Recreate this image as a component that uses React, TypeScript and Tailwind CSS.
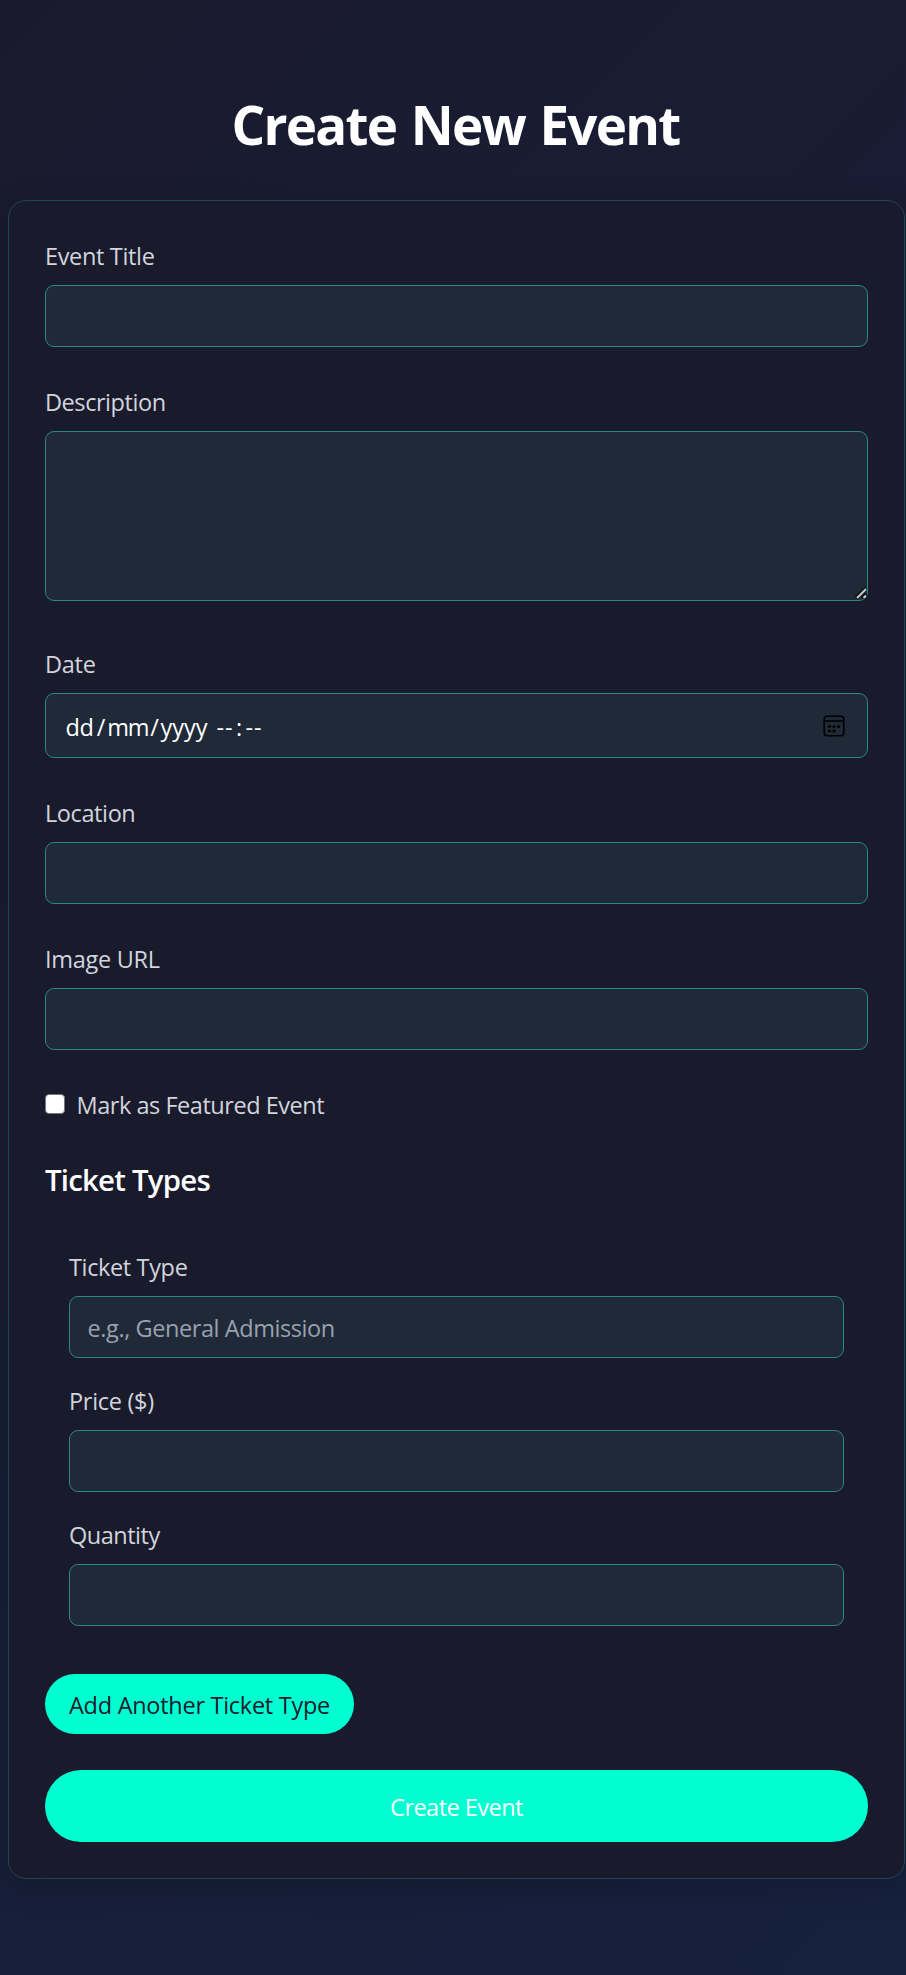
import type { ReactNode } from "react";

const fieldBox =
  "block w-full rounded-[9px] border border-[#29897e] bg-[#202937] text-white outline-none";

function Label({ children, tracking }: { children: ReactNode; tracking: string }) {
  return (
    <label className={`mb-3 block h-9 text-[23.5px] leading-[38px] text-gray-300 ${tracking}`}>
      {children}
    </label>
  );
}

function TextField({
  label,
  tracking,
  placeholder,
}: {
  label: string;
  tracking: string;
  placeholder?: string;
}) {
  return (
    <div>
      <Label tracking={tracking}>{label}</Label>
      <input
        type="text"
        placeholder={placeholder}
        className={`${fieldBox} h-[62px] pt-0.5 pl-[17.5px] pr-[18px] text-[23.5px] tracking-[-0.415px] placeholder:text-gray-400`}
      />
    </div>
  );
}

function CalendarIcon() {
  return (
    <svg width="22" height="22" viewBox="0 0 22 22" fill="none" className="block">
      <rect x="1.25" y="1.25" width="19.5" height="19.5" rx="3" stroke="#000" strokeWidth="1.6" />
      <path d="M1.5 6h19" stroke="#000" strokeWidth="1.6" />
      <g fill="#000">
        <circle cx="6.5" cy="11.5" r="1.6" />
        <circle cx="11" cy="11.5" r="1.6" />
        <circle cx="15.5" cy="11.5" r="1.6" />
        <circle cx="6.5" cy="16" r="1.6" />
        <circle cx="11" cy="16" r="1.6" />
      </g>
    </svg>
  );
}

function DateField() {
  return (
    <div>
      <Label tracking="tracking-[-0.25px]">Date</Label>
      <div className={`${fieldBox} h-[65px]`}>
        <div className="flex h-full items-center pt-0.5 pl-[19.5px] pr-[22px] text-[23.5px] leading-9">
          <span className="w-[29.5px] tracking-[-0.3px]">dd</span>
          <span className="w-3 text-center">/</span>
          <span className="w-[41.5px] text-center tracking-[-1.2px]">mm</span>
          <span className="w-3 text-center">/</span>
          <span className="w-[47px] text-center">yyyy</span>
          <span className="ml-2 w-[19px] text-center tracking-[1px]">--</span>
          <span className="w-[9px] text-center">:</span>
          <span className="ml-[1px] w-[19px] text-center tracking-[1px]">--</span>
          <span className="ml-auto -mt-0.5">
            <CalendarIcon />
          </span>
        </div>
      </div>
    </div>
  );
}

function DescriptionField() {
  return (
    <div className="pb-2">
      <Label tracking="tracking-[-0.44px]">Description</Label>
      <div className="relative">
        <textarea className={`${fieldBox} h-[170px] resize-none px-[18px] py-3 text-[23.5px]`} />
        <svg
          width="12"
          height="12"
          viewBox="0 0 12 12"
          fill="none"
          className="absolute right-[1px] bottom-[2px]"
        >
          <path d="M1 11L11 1M7 11.5L11.5 7" stroke="#0c0f16" strokeWidth="3.6" />
          <path d="M2 11L11 2M8.5 11L11 8.5" stroke="#c4c6c9" strokeWidth="2" />
        </svg>
      </div>
    </div>
  );
}

export default function App() {
  return (
    <main className="min-h-[1975px] bg-[linear-gradient(135deg,#1a1a2e_0%,#16213e_100%)] pt-[88px] pr-px pl-2 font-['Open_Sans','Noto_Sans',sans-serif]">
      <h1 className="mb-[40px] h-[72px] pr-[2px] text-center text-[52.9px] leading-[72px] font-bold tracking-[-1.75px] text-white [word-spacing:2.5px]">
        Create New Event
      </h1>
      <form className="flex h-[1679px] flex-col gap-9 rounded-[18px] border border-[#1e4a4f] bg-[#1a1a2d] p-9 shadow-[0_8px_32px_rgba(0,0,0,0.2)]">
        <TextField label="Event Title" tracking="tracking-[-0.34px]" />
        <DescriptionField />
        <DateField />
        <TextField label="Location" tracking="tracking-[-0.4px]" />
        <TextField label="Image URL" tracking="tracking-[-0.28px]" />

        <label className="flex h-9 text-[23.5px] leading-[38px] tracking-[-0.46px] text-gray-300">
          <input
            type="checkbox"
            className="mt-2 mr-[11.5px] size-5 appearance-none rounded-[4px] border-[1.5px] border-[#767676] bg-white"
          />
          Mark as Featured Event
        </label>

        <section>
          <h3 className="mb-6 h-[42px] text-[29.4px] leading-[44px] font-semibold tracking-[-0.78px] text-white">
            Ticket Types
          </h3>
          <div className="mb-6 flex flex-col gap-6 p-6">
            <TextField
              label="Ticket Type"
              tracking="tracking-[-0.362px]"
              placeholder="e.g., General Admission"
            />
            <TextField label="Price ($)" tracking="tracking-[-0.3px]" />
            <TextField label="Quantity" tracking="tracking-[-0.486px]" />
          </div>
          <button
            type="button"
            className="block h-[60px] w-[309px] rounded-full bg-[#00ffd0] pt-0.5 text-[23.5px] leading-9 tracking-[-0.275px] text-[#1a1a2e]"
          >
            Add Another Ticket Type
          </button>
        </section>

        <button
          type="button"
          className="block h-[72px] w-full shrink-0 rounded-full bg-[#00ffd0] pt-0.5 text-[23.5px] leading-9 tracking-[-0.53px] text-white"
        >
          Create Event
        </button>
      </form>
    </main>
  );
}
